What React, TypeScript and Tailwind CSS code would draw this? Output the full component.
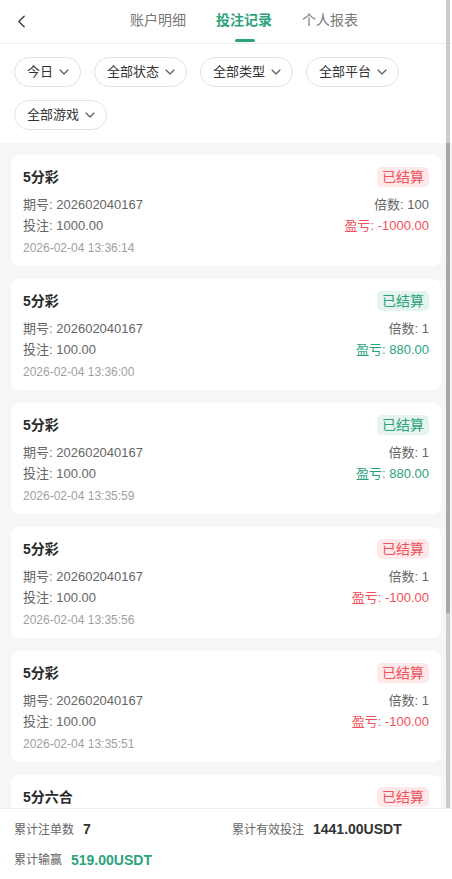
import { ChevronLeft } from "lucide-react";

const font = { fontFamily: '"Liberation Sans", "Noto Sans CJK SC", sans-serif' };

const records = [
  { name: "5分彩", issue: "202602040167", bet: "1000.00", multi: "100", pl: "-1000.00", win: false, time: "2026-02-04 13:36:14" },
  { name: "5分彩", issue: "202602040167", bet: "100.00", multi: "1", pl: "880.00", win: true, time: "2026-02-04 13:36:00" },
  { name: "5分彩", issue: "202602040167", bet: "100.00", multi: "1", pl: "880.00", win: true, time: "2026-02-04 13:35:59" },
  { name: "5分彩", issue: "202602040167", bet: "100.00", multi: "1", pl: "-100.00", win: false, time: "2026-02-04 13:35:56" },
  { name: "5分彩", issue: "202602040167", bet: "100.00", multi: "1", pl: "-100.00", win: false, time: "2026-02-04 13:35:51" },
  { name: "5分六合", issue: "202602040167", bet: "100.00", multi: "1", pl: "-100.00", win: false, time: "2026-02-04 13:35:40" },
];

const filters = ["今日", "全部状态", "全部类型", "全部平台", "全部游戏"];

const Arrow = () => (
  <svg width="10" height="6" viewBox="0 0 10 6" fill="none" className="text-[#555]">
    <path d="M1 1l4 4 4-4" stroke="currentColor" strokeWidth="1.1" strokeLinecap="round" strokeLinejoin="round" />
  </svg>
);

const Card = ({ r }: any) => {
  return (
    <div className="bg-white rounded-[8px] px-[12px] pt-[12px] pb-[9px] shrink-0">
      {/* 标题 + 状态 */}
      <div className="flex items-center justify-between h-[20px]">
        <span className="text-[14px] font-bold text-[#2a2a2a]">{r.name}</span>
        <span
          className={
            r.win
              ? "h-[20px] px-[5px] rounded-[5px] text-[14px] leading-[20px] bg-[#e5f4ee] text-[#2ba37a]"
              : "h-[20px] px-[5px] rounded-[5px] text-[14px] leading-[20px] bg-[#fde9ea] text-[#f5505a]"
          }
        >
          已结算
        </span>
      </div>
      <div className="mt-[7px] flex justify-between text-[13px] leading-[21px] text-[#666]">
        <span>期号: {r.issue}</span>
        <span>倍数: {r.multi}</span>
      </div>
      <div className="flex justify-between text-[13px] leading-[21px] text-[#666]">
        <span>投注: {r.bet}</span>
        <span className={r.win ? "text-[#2ba37a]" : "text-[#f5505a]"}>盈亏: {r.pl}</span>
      </div>
      <div className="mt-[3px] text-[12px] leading-[18px] text-[#a0a0a0]">{r.time}</div>
    </div>
  );
};

export default function App() {
  return (
    <div className="relative w-[452px] h-[879px] flex flex-col bg-white overflow-hidden" style={font}>
      {/* 顶部导航 */}
      <div className="h-[44px] shrink-0 flex items-center border-b border-[#eeeeee]">
        <button className="w-[44px] h-[43px] flex items-center pl-[11px] text-[#444]">
          <ChevronLeft size={21} strokeWidth={1.8} />
        </button>
        <div className="ml-[86px] flex gap-[30px] text-[14px]">
          <span className="relative h-[43px] leading-[40px] text-[#777]">账户明细</span>
          <span className="relative h-[43px] leading-[40px] text-[#2ba37a] font-bold">
            投注记录
            <span className="absolute left-[19px] bottom-[1px] w-[20px] h-[3px] rounded-full bg-[#2ba37a]" />
          </span>
          <span className="relative h-[43px] leading-[40px] text-[#777]">个人报表</span>
        </div>
      </div>

      {/* 筛选 */}
      <div className="shrink-0 flex flex-wrap gap-[13px] px-[14px] pt-[13px] pb-[13px]">
        {filters.map((f) => (
          <button
            key={f}
            className="h-[30px] flex items-center gap-[6px] pl-[12px] pr-[11px] rounded-full border border-[#e3e3e3] text-[13px] text-[#333]"
          >
            {f}
            <Arrow />
          </button>
        ))}
      </div>

      {/* 列表 */}
      <div className="flex-1 min-h-0 bg-[#f5f6f8] px-[11px] pt-[12px] flex flex-col gap-[13px] overflow-hidden">
        {records.map((r, i) => (
          <Card key={i} r={r} />
        ))}
      </div>

      {/* 底部统计 */}
      <div className="shrink-0 h-[71px] border-t border-[#eeeeee] bg-white px-[14px] pt-[10px] flex flex-col gap-[11px]">
        <div className="grid grid-cols-[218px_1fr] h-[20px] items-center">
          <div className="flex items-center gap-[9px]">
            <span className="text-[12px] text-[#666]">累计注单数</span>
            <span className="text-[14px] font-bold text-[#333]">7</span>
          </div>
          <div className="flex items-center gap-[9px]">
            <span className="text-[12px] text-[#666]">累计有效投注</span>
            <span className="text-[14px] font-bold text-[#333]">1441.00USDT</span>
          </div>
        </div>
        <div className="flex items-center gap-[9px] h-[20px]">
          <span className="text-[12px] text-[#666]">累计输赢</span>
          <span className="text-[14px] font-bold text-[#2ba37a]">519.00USDT</span>
        </div>
      </div>

      {/* 滚动条 */}
      <div className="absolute left-[446px] top-0 w-[4px] h-[808px] bg-[#cbcbcb]">
        <div className="absolute left-0 top-[143px] w-[4px] h-[470px] bg-[#a8a8a8]" />
      </div>
    </div>
  );
}
